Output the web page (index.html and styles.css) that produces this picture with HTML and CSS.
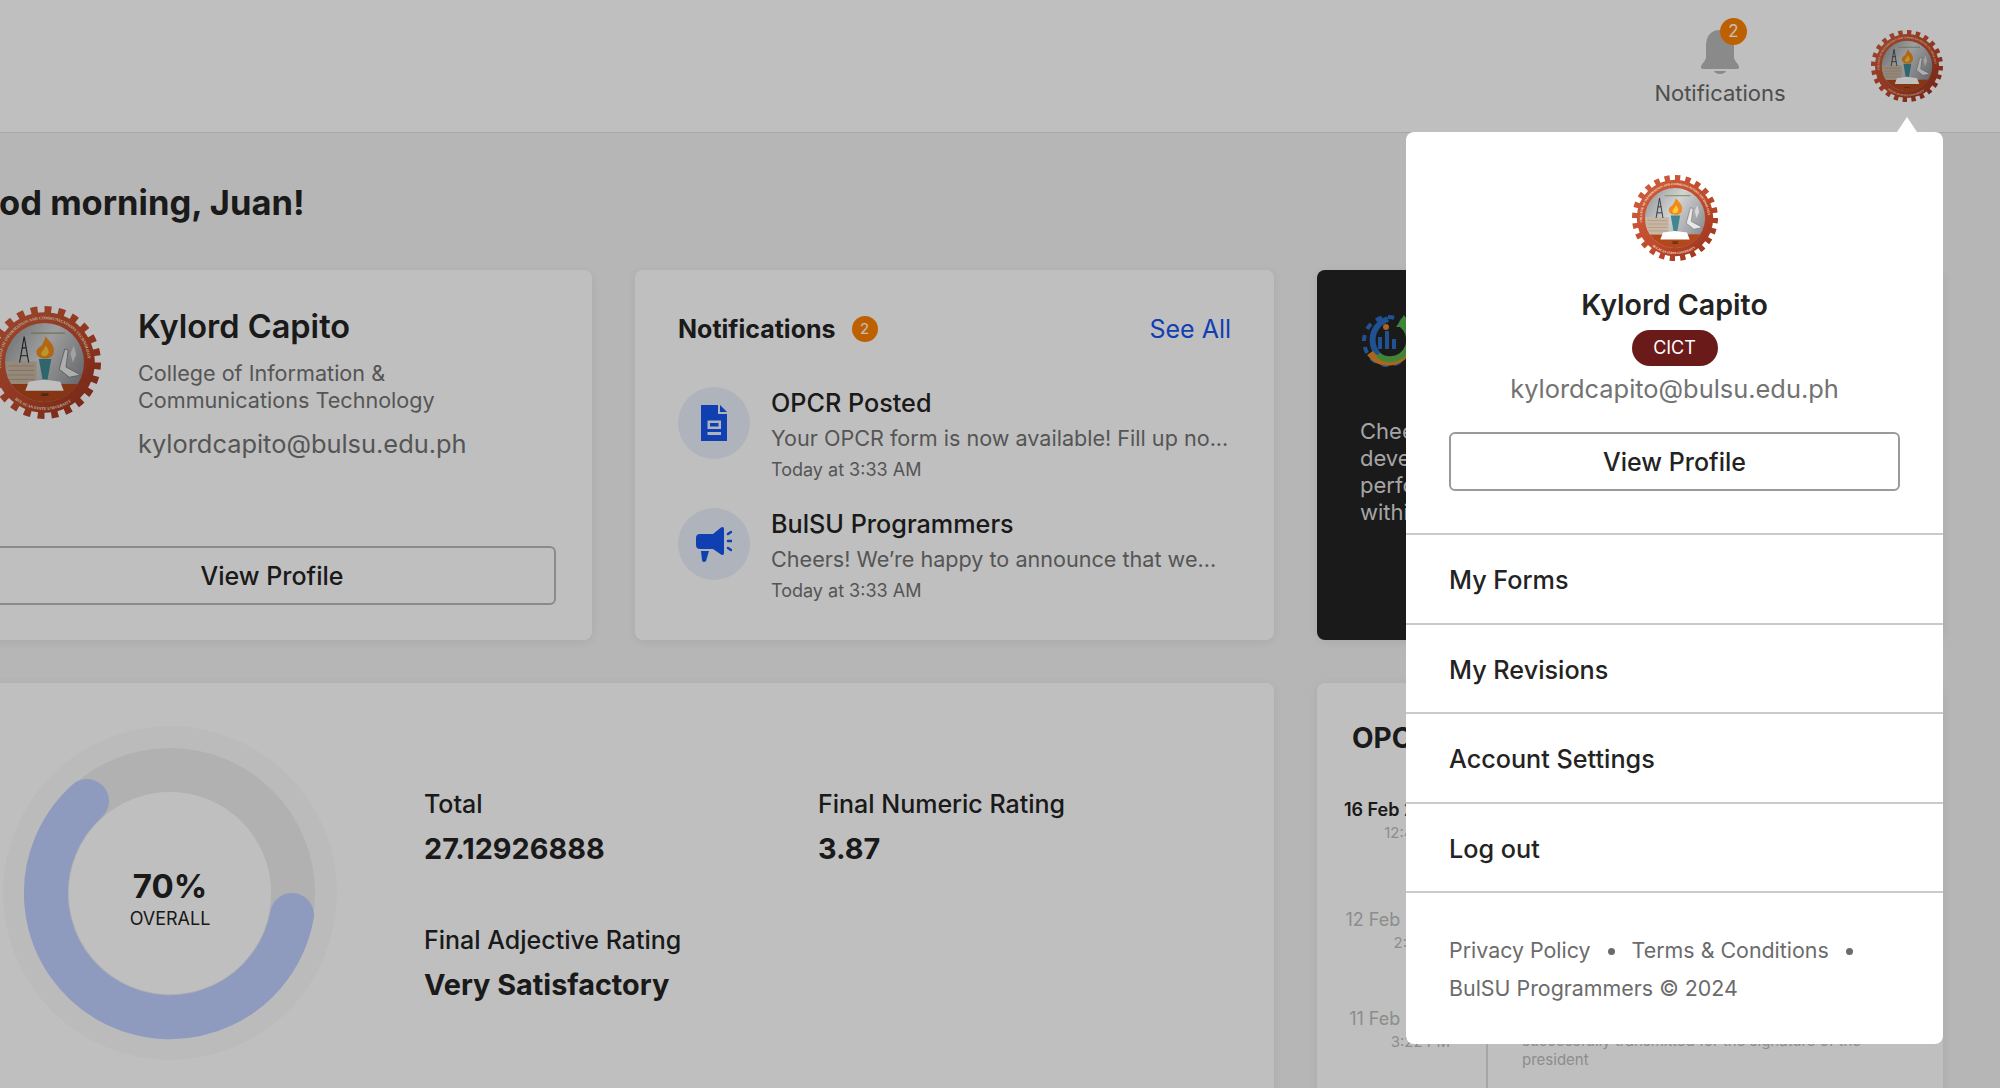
FILE: index.html

```html
<!DOCTYPE html>
<html>
<head>
    <title>Dashboard</title>
    <link rel="stylesheet" href="styles.css">
</head>
<body>
    <svg class="defs" width="0" height="0">
        <defs>
            <linearGradient id="sealSky" x1="0" y1="0" x2="1" y2="0.6">
                <stop offset="0" stop-color="#8c8f93"/>
                <stop offset="0.5" stop-color="#d2d3d5"/>
                <stop offset="1" stop-color="#909296"/>
            </linearGradient>
            <linearGradient id="sealRing" x1="0" y1="0" x2="1" y2="1">
                <stop offset="0" stop-color="#d0603c"/>
                <stop offset="0.55" stop-color="#c04a2c"/>
                <stop offset="1" stop-color="#96321e"/>
            </linearGradient>
            <clipPath id="sealInner"><circle cx="50" cy="50" r="35"/></clipPath>
            <path id="sealTop" d="M 11.8 55 A 38.5 38.5 0 1 1 88.2 55"/>
            <path id="sealBottom" d="M 15.6 74.1 A 42 42 0 0 0 84.4 74.1"/>
            <symbol id="seal" viewBox="0 0 100 100">
                <circle cx="50" cy="50" r="46.5" fill="none" stroke="url(#sealRing)" stroke-width="7" pathLength="48" stroke-dasharray="1 1"/>
                <circle cx="50" cy="50" r="44.5" fill="url(#sealRing)"/>
                <circle cx="50" cy="50" r="35" fill="url(#sealSky)"/>
                <g clip-path="url(#sealInner)">
                    <rect x="10" y="69" width="80" height="18" fill="#b4481c"/>
                    <rect x="16" y="49" width="27" height="20" fill="#c8b7a3"/>
                    <path d="M18 53h23M18 57h23M18 61h23M18 65h23" stroke="#a99886" stroke-width="0.8"/>
                    <path d="M28 50 L32 27 L36 50 M29 44h6M30 37h4" fill="none" stroke="#2a2a2a" stroke-width="1"/>
                    <path d="M63 56 L68 38 L71 39 L69 54 L82 61 L72 63Z" fill="#e8e8e8" stroke="#666" stroke-width="0.6"/>
                    <path d="M73 42 L76 35 L78 43 L75 50Z" fill="#d8d8d8"/>
                    <path d="M38 24h30" stroke="#8e9c66" stroke-width="1.2"/>
                    <path d="M45 47 H56 L52 69 H49Z" fill="#3f8791"/>
                    <path d="M51 27 C54 31 60 35 58 42 C57 48 44 48 43 42 C42 37 46 37 48 34 C49 32 50 30 51 27Z" fill="#ef8a1d"/>
                    <path d="M51 35 C53 38 55 40 53 43 C51 45 48 45 47 43 C47 40 50 39 51 35Z" fill="#f9c93b"/>
                    <path d="M36 67 L50 65 L64 67 L67 75 H33Z" fill="#fff"/>
                </g>
                <text class="seal-text"><textPath href="#sealTop">COLLEGE OF INFORMATION AND COMMUNICATIONS TECHNOLOGY</textPath></text>
                <text class="seal-text"><textPath href="#sealBottom" startOffset="12">BULACAN STATE UNIVERSITY</textPath></text>
                <text class="seal-year" x="50" y="80" text-anchor="middle">2001</text>
            </symbol>
        </defs>
    </svg>

    <div class="topbar">
        <div class="bell-block">
            <div class="bell">
                <svg width="40" height="46" viewBox="0 0 40 46">
                    <path d="M20 1 C10 1 6 8 6 17 V28 C6 32 1 35 1 38 C1 40 2 40 4 40 H36 C38 40 39 40 39 38 C39 35 34 32 34 28 V17 C34 8 30 1 20 1Z" fill="#b9b9b9"/>
                    <path d="M14 42 H26 C25 46 15 46 14 42Z" fill="#b9b9b9"/>
                </svg>
                <span class="bell-badge">2</span>
            </div>
            <div class="bell-label">Notifications</div>
        </div>
        <svg class="seal-small"><use href="#seal"/></svg>
    </div>

    <div class="main">
        <h1>Good morning, Juan!</h1>
        <div class="grid">
            <div class="card profile">
                <div class="profile-top">
                    <svg class="seal-big"><use href="#seal"/></svg>
                    <div>
                        <div class="profile-name">Kylord Capito</div>
                        <div class="profile-college">College of Information &amp;<br>Communications Technology</div>
                        <div class="profile-email">kylordcapito@bulsu.edu.ph</div>
                    </div>
                </div>
                <button class="btn">View Profile</button>
            </div>

            <div class="card notifs">
                <div class="notifs-head">
                    <span class="notifs-title">Notifications</span>
                    <span class="count">2</span>
                    <a class="see-all" href="#">See All</a>
                </div>
                <div class="notif-item">
                    <div class="notif-icon">
                        <svg width="26" height="36" viewBox="0 0 26 36">
                            <path d="M0 0 H17 V9 H26 V36 H0Z" fill="#1455ec"/>
                            <path d="M19 0 L26 7 H19Z" fill="#1455ec"/>
                            <path d="M6.5 15.5 H20 V24 H6.5Z M9 18 V21.5 H17.5 V18Z" fill="#e8effb" fill-rule="evenodd"/>
                            <rect x="6.5" y="27" width="13.500" height="3" fill="#e8effb"/>
                        </svg>
                    </div>
                    <div>
                        <div class="notif-title">OPCR Posted</div>
                        <div class="notif-desc">Your OPCR form is now available! Fill up no...</div>
                        <div class="notif-time">Today at 3:33 AM</div>
                    </div>
                </div>
                <div class="notif-item">
                    <div class="notif-icon">
                        <svg width="36" height="36" viewBox="0 0 36 36">
                            <path d="M4 8 H17 L25 1.500 Q28 0 28 3 V27 Q28 30 25 28.500 L17 23 H4 Q0 23 0 19 V12 Q0 8 4 8Z" fill="#1455ec"/>
                            <path d="M5 25 H13 L10 35 Q9 36 8 36 Q6 36 6 34Z" fill="#1455ec"/>
                            <path d="M32 8 L35 6 M32 15 H36 M32 22 L35 24" stroke="#1455ec" stroke-width="2.500" stroke-linecap="round"/>
                        </svg>
                    </div>
                    <div>
                        <div class="notif-title">BulSU Programmers</div>
                        <div class="notif-desc">Cheers! We’re happy to announce that we...</div>
                        <div class="notif-time">Today at 3:33 AM</div>
                    </div>
                </div>
            </div>

            <div class="card promo">
                <svg class="promo-logo" width="70" height="56" viewBox="0 0 70 56">
                    <path d="M28 48 A 22 22 0 0 1 28 6" fill="none" stroke="#2b6cc4" stroke-width="6"/>
                    <circle cx="28" cy="28" r="24" fill="none" stroke="#2b6cc4" stroke-width="4" pathLength="24" stroke-dasharray="1 1"/>
                    <path d="M10 40 A 22 22 0 0 0 46 40" fill="none" stroke="#e08a26" stroke-width="7"/>
                    <path d="M18 42 A 17 17 0 0 0 42 12" fill="none" stroke="#55b04a" stroke-width="6"/>
                    <path d="M36 14 L44 2 L52 14Z" fill="#55b04a"/>
                    <path d="M20 36 V24 M27 36 V18 M34 36 V26" stroke="#2b6cc4" stroke-width="4"/>
                    <circle cx="26" cy="14" r="3" fill="#e08a26"/>
                </svg>
                <p class="promo-text">Cheers! We’re<br>developing<br>performance<br>within</p>
            </div>

            <div class="card overall">
                <svg class="donut" width="334" height="334" viewBox="-167 -167 334 334">
                    <circle r="167" fill="#fafafa"/>
                    <circle r="123" fill="none" stroke="#ececec" stroke-width="44"/>
                    <circle r="101" fill="#fff"/>
                    <path d="M 122 22 A 124 124 0 1 1 -83 -92" fill="none" stroke="#becfff" stroke-width="44" stroke-linecap="round"/>
                    <text class="donut-value" y="5" text-anchor="middle">70%</text>
                    <text class="donut-label" y="32" text-anchor="middle">OVERALL</text>
                </svg>
                <div class="stats">
                    <div class="stat">
                        <div class="stat-label">Total</div>
                        <div class="stat-value">27.12926888</div>
                    </div>
                    <div class="stat">
                        <div class="stat-label">Final Numeric Rating</div>
                        <div class="stat-value">3.87</div>
                    </div>
                    <div class="stat">
                        <div class="stat-label">Final Adjective Rating</div>
                        <div class="stat-value">Very Satisfactory</div>
                    </div>
                </div>
            </div>

            <div class="card timeline">
                <div class="timeline-title">OPCR Timeline</div>
                <div class="tl-row tl-first">
                    <div class="tl-date">
                        <div class="tl-day tl-current">16 Feb 2024</div>
                        <div class="tl-hour">12:45 PM</div>
                    </div>
                </div>
                <div class="tl-row tl-second">
                    <div class="tl-date">
                        <div class="tl-day">12 Feb 2024</div>
                        <div class="tl-hour">2:10 PM</div>
                    </div>
                </div>
                <div class="tl-row tl-third">
                    <div class="tl-date">
                        <div class="tl-day">11 Feb 2024</div>
                        <div class="tl-hour">3:22 PM</div>
                    </div>
                    <div class="tl-text">OPCR was<br>successfully transmitted for the signature of the<br>president</div>
                </div>
            </div>
        </div>
    </div>

    <div class="scrim"></div>

    <div class="menu">
        <div class="menu-head">
            <svg class="seal-menu"><use href="#seal"/></svg>
            <div class="menu-name">Kylord Capito</div>
            <div class="menu-badge">CICT</div>
            <div class="menu-email">kylordcapito@bulsu.edu.ph</div>
            <button class="btn menu-btn">View Profile</button>
        </div>
        <a class="menu-item" href="#">My Forms</a>
        <a class="menu-item" href="#">My Revisions</a>
        <a class="menu-item" href="#">Account Settings</a>
        <a class="menu-item" href="#">Log out</a>
        <div class="menu-foot">
            Privacy Policy <span class="dot"></span> Terms &amp; Conditions <span class="dot"></span><br>
            BulSU Programmers © 2024
        </div>
    </div>
</body>
</html>
```

FILE: styles.css

```css
* {
    box-sizing: border-box;
}
html, body {
    margin: 0;
    height: 1088px;
    overflow: hidden;
}
body {
    font-family: Inter, "Noto Sans", sans-serif;
    background-color: #f3f3f3;
    color: #232323;
    position: relative;
}
.defs {
    position: absolute;
}
.seal-text {
    font-family: "Liberation Serif", serif;
    font-size: 3.6px;
    font-weight: bold;
    fill: #f6e6da;
}
.seal-year {
    font-family: "Liberation Serif", serif;
    font-size: 3.6px;
    font-weight: bold;
    fill: #232323;
}

.topbar {
    height: 133px;
    background-color: #fff;
    border-bottom: 1px solid #dedede;
    display: flex;
    justify-content: flex-end;
    align-items: center;
    gap: 86px;
    padding-right: 57px;
}
.bell-block {
    width: 130px;
    display: flex;
    flex-direction: column;
    align-items: center;
    padding-top: 3px;
}
.bell {
    position: relative;
    height: 46px;
}
.bell-badge {
    position: absolute;
    top: -11px;
    left: 20px;
    width: 27px;
    height: 27px;
    border-radius: 50%;
    background-color: #ff8100;
    color: #fff;
    font-size: 17px;
    line-height: 27px;
    text-align: center;
}
.bell-label {
    font-size: 22px;
    line-height: 28px;
    color: #686868;
    margin-top: 4px;
    white-space: nowrap;
}
.seal-small {
    width: 72px;
    height: 72px;
}

.main {
    margin-left: -48px;
    width: 1991px;
}
h1 {
    margin: 0;
    font-size: 34.5px;
    font-weight: 700;
    line-height: 44px;
    padding: 48px 0 45px 0;
}
.grid {
    display: grid;
    grid-template-columns: 640px 639px 626px;
    grid-template-rows: 370px 500px;
    column-gap: 43px;
    row-gap: 43px;
}
.card {
    background-color: #fff;
    border-radius: 8px;
    box-shadow: 0 2px 10px rgba(0, 0, 0, 0.07);
    overflow: hidden;
}

.profile {
    padding: 36px 36px 35px;
    display: flex;
    flex-direction: column;
    justify-content: space-between;
}
.profile-top {
    display: flex;
    gap: 37px;
}
.seal-big {
    width: 113px;
    height: 113px;
    flex-shrink: 0;
}
.profile-name {
    font-size: 32.5px;
    font-weight: 600;
    line-height: 40px;
    margin-top: 1px;
}
.profile-college {
    font-size: 21.6px;
    line-height: 27px;
    color: #727272;
    margin-top: 13px;
}
.profile-email {
    font-size: 25.4px;
    line-height: 30px;
    color: #727272;
    margin-top: 15px;
}
.btn {
    font-family: inherit;
    font-size: 25px;
    font-weight: 500;
    color: #232323;
    background-color: transparent;
    border: 2px solid #b9b9b9;
    border-radius: 6px;
    height: 59px;
    width: 100%;
}

.notifs {
    padding: 43px 43px 0;
}
.notifs-head {
    display: flex;
    align-items: center;
    height: 32px;
    margin-bottom: 42px;
}
.notifs-title {
    font-size: 25px;
    font-weight: 700;
}
.count {
    width: 26px;
    height: 26px;
    margin-left: 16px;
    border-radius: 50%;
    background-color: #ff8100;
    color: #fff;
    font-size: 15px;
    line-height: 26px;
    text-align: center;
}
.see-all {
    margin-left: auto;
    font-size: 25px;
    color: #1455ec;
    text-decoration: none;
}
.notif-item {
    display: flex;
    gap: 21px;
    height: 121px;
}
.notif-icon {
    width: 72px;
    height: 72px;
    border-radius: 50%;
    background-color: #e8effb;
    display: flex;
    align-items: center;
    justify-content: center;
    flex-shrink: 0;
}
.notif-title {
    font-size: 25.2px;
    font-weight: 500;
    line-height: 32px;
}
.notif-desc {
    font-size: 21.6px;
    line-height: 30px;
    color: #727272;
    margin-top: 4px;
    white-space: nowrap;
}
.notif-time {
    font-size: 18px;
    line-height: 24px;
    color: #727272;
    margin-top: 5px;
}

.promo {
    background-color: #232323;
    padding: 43px 43px;
}
.promo-logo {
    display: block;
}
.promo-text {
    margin: 49px 0 0;
    font-size: 22px;
    line-height: 27px;
    color: #dcdcdc;
}

.overall {
    grid-column: span 2;
    display: flex;
    padding: 43px 0 0 51px;
}
.donut {
    flex-shrink: 0;
}
.donut-value {
    font-family: Inter, sans-serif;
    font-size: 33px;
    font-weight: 700;
    fill: #232323;
}
.donut-label {
    font-family: Inter, sans-serif;
    font-size: 18px;
    fill: #232323;
}
.stats {
    margin-left: 87px;
    padding-top: 62px;
    display: grid;
    grid-template-columns: 394px 394px;
    grid-auto-rows: 136px;
}
.stat-label {
    font-size: 25px;
    font-weight: 500;
    line-height: 32px;
}
.stat-value {
    font-size: 28.8px;
    font-weight: 700;
    line-height: 38px;
    margin-top: 10px;
}

.timeline {
    padding: 38px 0 0 35px;
}
.timeline-title {
    font-size: 28px;
    font-weight: 700;
    line-height: 34px;
}
.tl-row {
    display: flex;
    gap: 36px;
}
.tl-first {
    margin-top: 44px;
    height: 110px;
}
.tl-second {
    height: 99px;
}
.tl-date {
    width: 107px;
    margin-left: -9px;
    margin-right: 36px;
    text-align: right;
    flex-shrink: 0;
    white-space: nowrap;
}
.tl-day {
    font-size: 18px;
    line-height: 22px;
    color: #bcbcbc;
}
.tl-current {
    font-weight: 600;
    color: #232323;
}
.tl-hour {
    font-size: 15px;
    line-height: 24px;
    color: #bcbcbc;
}
.tl-third {
    position: relative;
}
.tl-third::before {
    content: "";
    position: absolute;
    left: 134px;
    top: 0;
    height: 200px;
    border-left: 2px solid #dedede;
}
.tl-text {
    font-size: 15px;
    line-height: 19px;
    color: #bcbcbc;
    margin-top: 4px;
}

.scrim {
    position: absolute;
    inset: 0;
    background-color: rgba(0, 0, 0, 0.25);
}

.menu {
    position: absolute;
    top: 132px;
    right: 57px;
    width: 537px;
    height: 912px;
    background-color: #fff;
    border-radius: 8px;
}
.menu::before {
    content: "";
    position: absolute;
    top: -15px;
    right: 26px;
    border-left: 10px solid transparent;
    border-right: 10px solid transparent;
    border-bottom: 15px solid #fff;
}
.menu-head {
    display: flex;
    flex-direction: column;
    align-items: center;
    height: 403px;
    padding: 43px 43px 0;
    border-bottom: 2px solid #c9c9d0;
}
.seal-menu {
    width: 86px;
    height: 86px;
}
.menu-name {
    font-size: 28.6px;
    font-weight: 600;
    line-height: 34px;
    margin-top: 27px;
}
.menu-badge {
    width: 86px;
    height: 36px;
    margin-top: 8px;
    border-radius: 18px;
    background-color: #6b1a1a;
    color: #fff;
    font-size: 18px;
    line-height: 36px;
    text-align: center;
}
.menu-email {
    font-size: 25.4px;
    line-height: 30px;
    color: #727272;
    margin-top: 8px;
}
.menu-btn {
    margin-top: 28px;
    border-color: #9a9a9a;
}
.menu-item {
    display: flex;
    align-items: center;
    height: 89.5px;
    padding: 3px 0 0 43px;
    font-size: 25.2px;
    font-weight: 500;
    color: #232323;
    text-decoration: none;
    border-bottom: 2px solid #c9c9d0;
}
.menu-foot {
    padding: 38px 43px 0;
    font-size: 21.4px;
    line-height: 38px;
    color: #6b6b6b;
}
.dot {
    display: inline-block;
    width: 7px;
    height: 7px;
    margin: 0 11px 3px;
    border-radius: 50%;
    background-color: #6b6b6b;
}
```
